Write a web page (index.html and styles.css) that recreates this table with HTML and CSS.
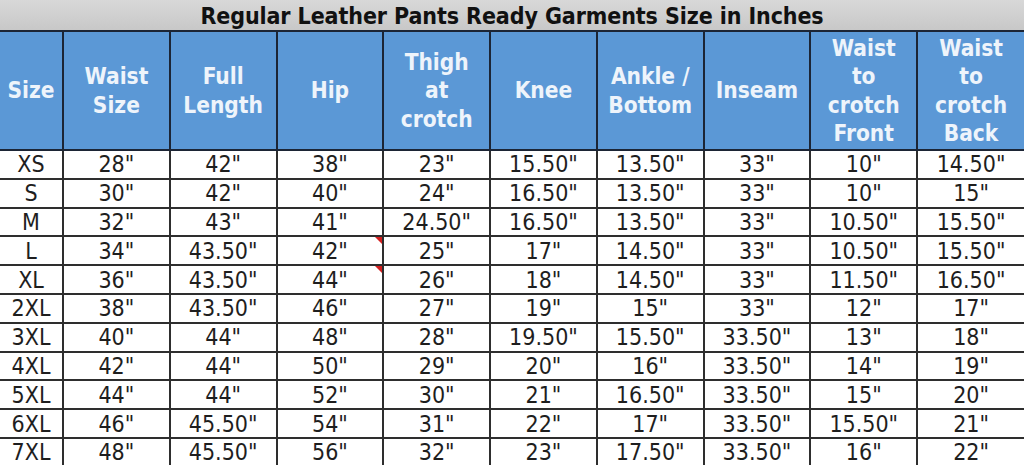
FILE: index.html
```html
<!DOCTYPE html>
<html>
<head>
<meta charset="utf-8">
<link rel="stylesheet" href="styles.css">
</head>
<body>
<div class="sheet">
  <div class="title">Regular Leather Pants Ready Garments Size in Inches</div>
  <table class="chart">
    <colgroup>
      <col class="c-size">
      <col><col><col><col><col><col><col><col><col>
    </colgroup>
    <thead>
      <tr>
        <th>Size</th>
        <th>Waist<br>Size</th>
        <th>Full<br>Length</th>
        <th>Hip</th>
        <th>Thigh<br>at<br>crotch</th>
        <th>Knee</th>
        <th>Ankle /<br>Bottom</th>
        <th>Inseam</th>
        <th>Waist<br>to<br>crotch<br>Front</th>
        <th>Waist<br>to<br>crotch<br>Back</th>
      </tr>
    </thead>
    <tbody>
      <tr><td>XS</td><td>28"</td><td>42"</td><td>38"</td><td>23"</td><td>15.50"</td><td>13.50"</td><td>33"</td><td>10"</td><td>14.50"</td></tr>
      <tr><td>S</td><td>30"</td><td>42"</td><td>40"</td><td>24"</td><td>16.50"</td><td>13.50"</td><td>33"</td><td>10"</td><td>15"</td></tr>
      <tr><td>M</td><td>32"</td><td>43"</td><td>41"</td><td>24.50"</td><td>16.50"</td><td>13.50"</td><td>33"</td><td>10.50"</td><td>15.50"</td></tr>
      <tr><td>L</td><td>34"</td><td>43.50"</td><td class="note">42"</td><td>25"</td><td>17"</td><td>14.50"</td><td>33"</td><td>10.50"</td><td>15.50"</td></tr>
      <tr><td>XL</td><td>36"</td><td>43.50"</td><td class="note">44"</td><td>26"</td><td>18"</td><td>14.50"</td><td>33"</td><td>11.50"</td><td>16.50"</td></tr>
      <tr><td>2XL</td><td>38"</td><td>43.50"</td><td>46"</td><td>27"</td><td>19"</td><td>15"</td><td>33"</td><td>12"</td><td>17"</td></tr>
      <tr><td>3XL</td><td>40"</td><td>44"</td><td>48"</td><td>28"</td><td>19.50"</td><td>15.50"</td><td>33.50"</td><td>13"</td><td>18"</td></tr>
      <tr><td>4XL</td><td>42"</td><td>44"</td><td>50"</td><td>29"</td><td>20"</td><td>16"</td><td>33.50"</td><td>14"</td><td>19"</td></tr>
      <tr><td>5XL</td><td>44"</td><td>44"</td><td>52"</td><td>30"</td><td>21"</td><td>16.50"</td><td>33.50"</td><td>15"</td><td>20"</td></tr>
      <tr><td>6XL</td><td>46"</td><td>45.50"</td><td>54"</td><td>31"</td><td>22"</td><td>17"</td><td>33.50"</td><td>15.50"</td><td>21"</td></tr>
      <tr><td>7XL</td><td>48"</td><td>45.50"</td><td>56"</td><td>32"</td><td>23"</td><td>17.50"</td><td>33.50"</td><td>16"</td><td>22"</td></tr>
    </tbody>
  </table>
</div>
</body>
</html>
```
FILE: styles.css
```css
html, body {
  margin: 0;
  padding: 0;
  background: #ffffff;
}
.sheet {
  width: 1024px;
  height: 465px;
  overflow: hidden;
  font-family: "DejaVu Sans Condensed", "DejaVu Sans", sans-serif;
}
.title {
  height: 30px;
  line-height: 33px;
  background: linear-gradient(#d8d8d8, #c8c8c8);
  text-align: center;
  font-weight: bold;
  font-size: 23px;
  color: #111111;
  letter-spacing: -0.1px;
}
.chart {
  width: 1024px;
  border-collapse: collapse;
  table-layout: fixed;
}
.c-size {
  width: 63px;
}
.chart th {
  height: 117px;
  padding: 0;
  background: #5b98d6;
  color: #eef4fb;
  font-weight: bold;
  font-size: 22.5px;
  line-height: 28.5px;
  border: 2px solid #1c2535;
  text-align: center;
  vertical-align: middle;
}
.chart td {
  height: 26.8px;
  padding: 0;
  font-size: 23px;
  line-height: 24px;
  color: #1e1e1e;
  border: 2px solid #2e2e2e;
  text-align: center;
  vertical-align: middle;
}
.chart td:first-child,
.chart th:first-child {
  border-left: none;
}
.chart td:last-child,
.chart th:last-child {
  border-right: none;
}
.note {
  position: relative;
}
.note::after {
  content: "";
  position: absolute;
  top: 0;
  right: 0;
  border-top: 7px solid #d42020;
  border-left: 7px solid transparent;
}
```
